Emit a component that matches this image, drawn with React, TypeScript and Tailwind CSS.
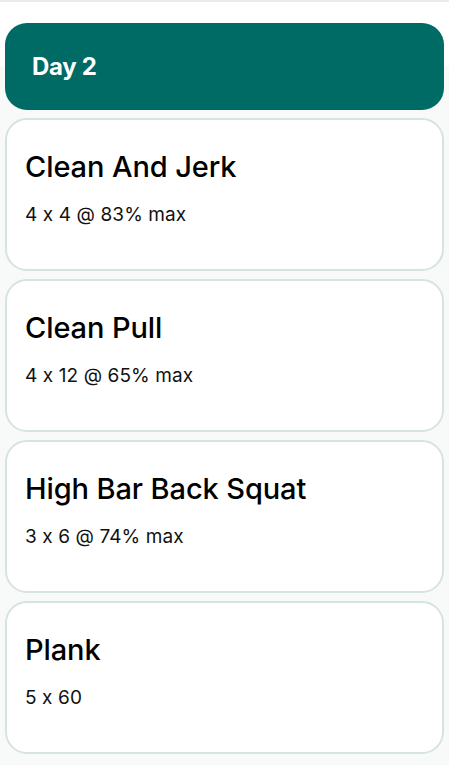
import React from 'react'

interface Exercise {
  name: string
  scheme: string
}

const EXERCISES: Exercise[] = [
  { name: 'Clean And Jerk', scheme: '4 x 4 @ 83% max' },
  { name: 'Clean Pull', scheme: '4 x 12 @ 65% max' },
  { name: 'High Bar Back Squat', scheme: '3 x 6 @ 74% max' },
  { name: 'Plank', scheme: '5 x 60' },
]

function ExerciseCard({ exercise }: { exercise: Exercise }) {
  return (
    <div className="h-[153px] rounded-[22px] border-2 border-[#d6e4e1] bg-white px-[18px] pt-[29px]">
      <h3 className="text-[29px] leading-[36px] font-medium tracking-[-0.1px] text-black">
        {exercise.name}
      </h3>
      <p className="mt-[19px] text-[19px] leading-[22px] tracking-[0.1px] text-[#111]">
        {exercise.scheme}
      </p>
    </div>
  )
}

export default function App() {
  return (
    <div
      className="min-h-[765px] w-[449px] border-t-2 border-[#e9ecec] bg-[#f8f9f9] [font-feature-settings:'calt'_0]"
      style={{ fontFamily: 'Inter, "Noto Sans", sans-serif' }}
    >
      {/* Day header */}
      <div className="bg-[linear-gradient(to_bottom,#ffffff_64px,#f8f9f9_64px)] px-[5px] pt-[21px] pb-[8px]">
        <div className="flex h-[87px] items-center rounded-[22px] bg-[#006a65] pl-[27px]">
          <h2 className="text-[24px] font-bold tracking-[-0.3px] text-white">Day 2</h2>
        </div>
      </div>

      {/* Exercise list */}
      <div className="flex flex-col gap-[8px] px-[5px] pb-[13px]">
        {EXERCISES.map((exercise) => (
          <ExerciseCard key={exercise.name} exercise={exercise} />
        ))}
      </div>
    </div>
  )
}
